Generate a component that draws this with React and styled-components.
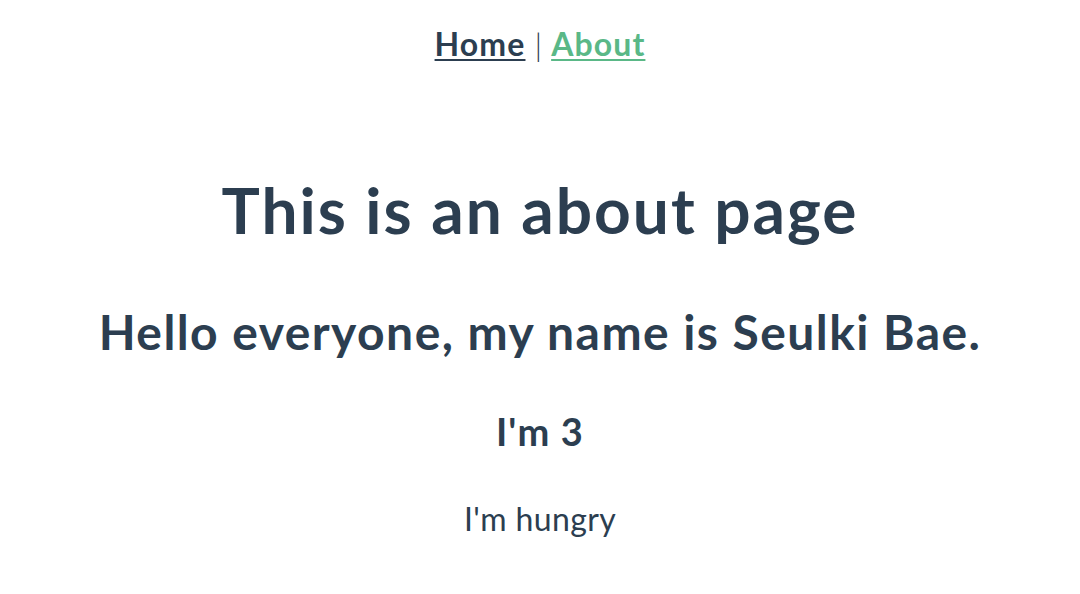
import React from "react";
import styled, { createGlobalStyle } from "styled-components";

const Global = createGlobalStyle`
  html, body { margin: 0; padding: 0; background: #fff; }
  body {
    font-family: Lato, "Noto Sans", "Liberation Sans", sans-serif;
    color: #2c3e50;
    -webkit-font-smoothing: antialiased;
  }
`;

const Page = styled.div`
  display: flex;
  flex-direction: column;
  align-items: center;
  text-align: center;
  padding-top: 25px;
`;

const Nav = styled.nav`
  font-size: 32px;
  line-height: 1.2;
  display: flex;
  align-items: baseline;
  gap: 9px;
`;

const NavLink = styled.a`
  font-weight: 700;
  letter-spacing: 0.035em;
  color: ${(p) => (p.$active ? "#5ab887" : "#2c3e50")};
  text-decoration: underline;
  text-decoration-thickness: 2px;
  text-underline-offset: 3px;
  cursor: pointer;
`;

const Sep = styled.span`
  font-weight: 300;
  color: #2c3e50;
`;

const Title = styled.h1`
  margin: 109px 0 0;
  font-size: 64px;
  line-height: 1.2;
  font-weight: 700;
  letter-spacing: 0.031em;
`;

const Subtitle = styled.h2`
  margin: 54px 0 0;
  font-size: 48px;
  line-height: 1.2;
  font-weight: 700;
  letter-spacing: 0.03em;
`;

const Age = styled.h3`
  margin: 48px 0 0;
  font-size: 38px;
  line-height: 1.2;
  font-weight: 700;
  letter-spacing: 0.03em;
`;

const Text = styled.p`
  margin: 46px 0 0;
  font-size: 32px;
  line-height: 1.2;
  font-weight: 400;
  letter-spacing: 0.012em;
`;

export default function App() {
  return (
    <>
      <Global />
      <Page>
        <Nav>
          <NavLink>Home</NavLink>
          <Sep>|</Sep>
          <NavLink $active>About</NavLink>
        </Nav>
        <Title>This is an about page</Title>
        <Subtitle>Hello everyone, my name is Seulki Bae.</Subtitle>
        <Age>I'm 3</Age>
        <Text>I'm hungry</Text>
      </Page>
    </>
  );
}
